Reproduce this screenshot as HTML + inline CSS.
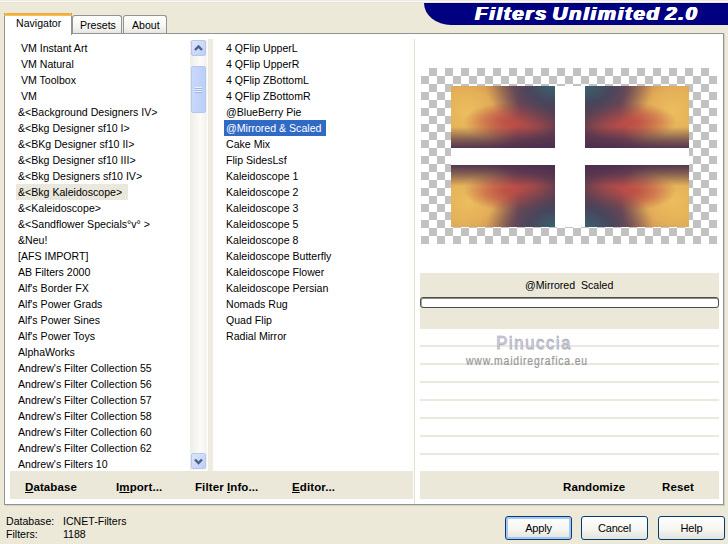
<!DOCTYPE html>
<html><head><meta charset="utf-8"><style>
*{margin:0;padding:0;box-sizing:border-box}
html,body{width:728px;height:544px;overflow:hidden}
body{background:#ECE9D8;font-family:"Liberation Sans",sans-serif;font-size:11px;color:#000;position:relative}
.a{position:absolute}
.t{position:absolute;white-space:pre;line-height:16px;height:16px;font-size:11.5px;transform:scaleX(.92);transform-origin:0 0}
.l1 .t{left:18px}
.l2 .t{left:226px}
.b{font-weight:bold;font-size:11.5px;letter-spacing:0.1px;white-space:pre;position:absolute;line-height:13px}
.u{text-decoration:underline}
.q{width:104px;height:62px;background:
 linear-gradient(180deg,rgba(72,46,78,0) 66%,rgba(72,46,78,.6) 86%,rgba(72,46,78,.92) 100%),
 radial-gradient(ellipse 66% 72% at 100% 0%,rgba(58,98,112,1) 0%,rgba(64,70,94,.85) 38%,rgba(66,62,86,.4) 70%,rgba(66,62,86,0) 100%),
 radial-gradient(ellipse 46% 32% at 58% 58%,rgba(190,76,70,1) 0%,rgba(190,76,70,.55) 55%,rgba(190,76,70,0) 100%),
 radial-gradient(ellipse 50% 80% at 16% 42%,rgba(236,190,94,1) 0%,rgba(232,182,88,.85) 45%,rgba(222,150,82,0) 100%),
 linear-gradient(90deg,#D09A5A 0%,#C07852 38%,#8A4C52 66%,#6A3E4E 100%)}

.btn{position:absolute;top:516px;height:24px;width:67px;border:1px solid #003C74;border-radius:3px;background:linear-gradient(#FFFFFF,#F4F4F0 60%,#E3E2DA);text-align:center;line-height:22px;letter-spacing:-0.2px}
</style></head><body>
<!-- top stripes -->
<div class="a" style="left:0;top:0;width:728px;height:1px;background:#EDEAE3"></div>
<div class="a" style="left:0;top:1px;width:728px;height:1px;background:#FCFCF4"></div>
<div class="a" style="left:0;top:2px;width:728px;height:1px;background:#E7E4D7"></div>

<!-- banner -->
<div class="a" style="left:424px;top:3px;width:304px;height:22px;background:#000080;border-bottom-left-radius:27px 22px"></div>
<div class="a" id="title" style="left:475px;top:2px;color:#fff;font-weight:bold;font-style:italic;font-size:19px;line-height:24px;white-space:pre;letter-spacing:1.5px;word-spacing:-2.5px;text-shadow:0.7px 0 0 #fff,-0.7px 0 0 #fff,0 0.4px 0 #fff;transform:scaleX(1.08);transform-origin:0 0">Filters Unlimited 2.0</div>

<!-- tab page -->
<div class="a" style="left:4px;top:33px;width:720px;height:472px;border:1px solid #8F9593;background:#fff;box-shadow:1px 1px 0 #D0CFC4"></div>

<!-- tabs -->
<div class="a" style="left:72px;top:15px;width:50px;height:18px;border:1px solid #8F9593;border-bottom:none;border-radius:3px 3px 0 0;background:linear-gradient(#FFFFFF,#F3F3EF 70%,#E6E5DE)"></div>
<div class="a" style="left:123px;top:15px;width:44px;height:18px;border:1px solid #8F9593;border-bottom:none;border-radius:3px 3px 0 0;background:linear-gradient(#FFFFFF,#F3F3EF 70%,#E6E5DE)"></div>
<div class="a" style="left:4px;top:13px;width:68px;height:22px;border:1px solid #8F9593;border-top:none;border-bottom:none;background:#fff"></div>
<div class="a" style="left:4px;top:13px;width:68px;height:3px;border-radius:3px 3px 0 0;background:linear-gradient(#E4A43C,#FAC44C)"></div>
<div class="t" style="left:16px;top:15px">Navigator</div>
<div class="t" style="left:80px;top:17px">Presets</div>
<div class="t" style="left:132px;top:17px">About</div>

<!-- list 1 -->
<div class="a" style="left:16px;top:184px;width:112px;height:16px;background:#EAE8DC"></div>
<div class="l1">
<div class="t" style="top:40px">&nbsp;VM Instant Art</div>
<div class="t" style="top:56px">&nbsp;VM Natural</div>
<div class="t" style="top:72px">&nbsp;VM Toolbox</div>
<div class="t" style="top:88px">&nbsp;VM</div>
<div class="t" style="top:104px">&amp;&lt;Background Designers IV&gt;</div>
<div class="t" style="top:120px">&amp;&lt;Bkg Designer sf10 I&gt;</div>
<div class="t" style="top:136px">&amp;&lt;BKg Designer sf10 II&gt;</div>
<div class="t" style="top:152px">&amp;&lt;Bkg Designer sf10 III&gt;</div>
<div class="t" style="top:168px">&amp;&lt;Bkg Designers sf10 IV&gt;</div>
<div class="t" style="top:184px">&amp;&lt;Bkg Kaleidoscope&gt;</div>
<div class="t" style="top:200px">&amp;&lt;Kaleidoscope&gt;</div>
<div class="t" style="top:216px">&amp;&lt;Sandflower Specials°v° &gt;</div>
<div class="t" style="top:232px">&amp;Neu!</div>
<div class="t" style="top:248px">[AFS IMPORT]</div>
<div class="t" style="top:264px">AB Filters 2000</div>
<div class="t" style="top:280px">Alf's Border FX</div>
<div class="t" style="top:296px">Alf's Power Grads</div>
<div class="t" style="top:312px">Alf's Power Sines</div>
<div class="t" style="top:328px">Alf's Power Toys</div>
<div class="t" style="top:344px">AlphaWorks</div>
<div class="t" style="top:360px">Andrew's Filter Collection 55</div>
<div class="t" style="top:376px">Andrew's Filter Collection 56</div>
<div class="t" style="top:392px">Andrew's Filter Collection 57</div>
<div class="t" style="top:408px">Andrew's Filter Collection 58</div>
<div class="t" style="top:424px">Andrew's Filter Collection 60</div>
<div class="t" style="top:440px">Andrew's Filter Collection 62</div>
<div class="t" style="top:456px">Andrew's Filters 10</div>
</div>

<!-- scrollbar -->
<div class="a" style="left:190px;top:40px;width:17px;height:430px;background:linear-gradient(90deg,#EEEDE5,#FBFBF8 60%,#F3F2EC)"></div>
<div class="a" style="left:191px;top:40px;width:15px;height:16px;border:1px solid #B5C8F1;border-radius:2px;background:linear-gradient(135deg,#DCE6FC,#BDCFF8)"></div>
<svg class="a" style="left:191px;top:40px" width="15" height="16"><path d="M4 10 L7.5 6.5 L11 10" stroke="#4D6185" stroke-width="2.4" fill="none"/></svg>
<div class="a" style="left:191px;top:66px;width:15px;height:47px;border:1px solid #B5C8F1;border-radius:2px;background:linear-gradient(90deg,#C9D8FC,#BCCFF8)"></div>
<div class="a" style="left:195px;top:87px;width:7px;height:6px;background:repeating-linear-gradient(#EEF3FE 0 1px,#9DB2E8 1px 2px)"></div>
<div class="a" style="left:191px;top:453px;width:15px;height:16px;border:1px solid #B5C8F1;border-radius:2px;background:linear-gradient(135deg,#DCE6FC,#BDCFF8)"></div>
<svg class="a" style="left:191px;top:453px" width="15" height="16"><path d="M4 6.5 L7.5 10 L11 6.5" stroke="#4D6185" stroke-width="2.4" fill="none"/></svg>
<div class="a" style="left:208px;top:39px;width:5px;height:432px;background:#EEECE0"></div>

<!-- list 2 -->
<div class="a" style="left:224px;top:120px;width:102px;height:16px;background:#316AC5"></div>
<div class="l2">
<div class="t" style="top:40px">4 QFlip UpperL</div>
<div class="t" style="top:56px">4 QFlip UpperR</div>
<div class="t" style="top:72px">4 QFlip ZBottomL</div>
<div class="t" style="top:88px">4 QFlip ZBottomR</div>
<div class="t" style="top:104px">@BlueBerry Pie</div>
<div class="t" style="top:120px;color:#fff">@Mirrored &amp; Scaled</div>
<div class="t" style="top:136px">Cake Mix</div>
<div class="t" style="top:152px">Flip SidesLsf</div>
<div class="t" style="top:168px">Kaleidoscope 1</div>
<div class="t" style="top:184px">Kaleidoscope 2</div>
<div class="t" style="top:200px">Kaleidoscope 3</div>
<div class="t" style="top:216px">Kaleidoscope 5</div>
<div class="t" style="top:232px">Kaleidoscope 8</div>
<div class="t" style="top:248px">Kaleidoscope Butterfly</div>
<div class="t" style="top:264px">Kaleidoscope Flower</div>
<div class="t" style="top:280px">Kaleidoscope Persian</div>
<div class="t" style="top:296px">Nomads Rug</div>
<div class="t" style="top:312px">Quad Flip</div>
<div class="t" style="top:328px">Radial Mirror</div>
</div>

<!-- right divider -->
<div class="a" style="left:410px;top:39px;width:4px;height:432px;background:#FDFDF7"></div>
<div class="a" style="left:414px;top:39px;width:1px;height:465px;background:#E2E2DA"></div>

<!-- preview checker -->
<div class="a" style="left:421px;top:68px;width:296px;height:176px;background:conic-gradient(#C2C2C2 25%,#fff 0 50%,#C2C2C2 0 75%,#fff 0) 0 0/16px 16px"></div>
<div class="a" style="left:451px;top:86px;width:238px;height:141px;background:#fff"></div>
<div class="q a" style="left:451px;top:86px"></div>
<div class="q a" style="left:585px;top:86px;transform:scaleX(-1)"></div>
<div class="q a" style="left:451px;top:165px;transform:scaleY(-1)"></div>
<div class="q a" style="left:585px;top:165px;transform:scale(-1,-1)"></div>

<!-- name bar -->
<div class="a" style="left:420px;top:273px;width:299px;height:56px;background:#EBE8D9"></div>
<div class="t" style="left:525px;top:277px">@Mirrored  Scaled</div>
<div class="a" style="left:420px;top:297px;width:299px;height:11px;border:1px solid #4E4E48;border-radius:3px;background:#fff;box-shadow:inset 0 1px 0 #8A8A84,inset 1px 0 0 #A8A8A2"></div>

<!-- lines -->
<div class="a" style="left:420px;top:345px;width:299px;height:2px;background:#E9E9DE"></div>
<div class="a" style="left:420px;top:363px;width:299px;height:2px;background:#E9E9DE"></div>
<div class="a" style="left:420px;top:381px;width:299px;height:2px;background:#E9E9DE"></div>
<div class="a" style="left:420px;top:399px;width:299px;height:2px;background:#E9E9DE"></div>
<div class="a" style="left:420px;top:417px;width:299px;height:2px;background:#E9E9DE"></div>
<div class="a" style="left:420px;top:435px;width:299px;height:2px;background:#E9E9DE"></div>
<div class="a" style="left:420px;top:453px;width:299px;height:2px;background:#E9E9DE"></div>

<!-- watermark -->
<div class="a" style="left:496px;top:331px;font-size:19px;line-height:24px;color:#D2D2E4;white-space:pre;letter-spacing:1.8px;-webkit-text-stroke:0.45px #9898AC;text-shadow:1px 1px 0 rgba(120,120,130,.3);transform:scaleX(.88);transform-origin:0 0">Pinuccia</div>
<div class="a" style="left:466px;top:354px;font-size:12px;line-height:14px;color:#A0A0A0;white-space:pre;letter-spacing:1px;-webkit-text-stroke:0.2px #888888;transform:scaleX(.86);transform-origin:0 0">www.maidiregrafica.eu</div>

<!-- footers -->
<div class="a" style="left:10px;top:471px;width:403px;height:28px;background:#EBE8D9"></div>
<div class="a" style="left:420px;top:471px;width:299px;height:28px;background:#EBE8D9"></div>
<div class="b" style="left:25px;top:481px"><span class="u">D</span>atabase</div>
<div class="b" style="left:116px;top:481px">I<span class="u">m</span>port...</div>
<div class="b" style="left:195px;top:481px">Filter <span class="u">I</span>nfo...</div>
<div class="b" style="left:292px;top:481px"><span class="u">E</span>ditor...</div>
<div class="b" style="left:563px;top:481px">Randomize</div>
<div class="b" style="left:662px;top:481px">Reset</div>

<!-- status -->
<div class="t" style="left:6px;top:515px;line-height:13px">Database:</div>
<div class="t" style="left:63px;top:515px;line-height:13px">ICNET-Filters</div>
<div class="t" style="left:6px;top:527.5px;line-height:13px">Filters:</div>
<div class="t" style="left:63px;top:527.5px;line-height:13px">1188</div>

<!-- buttons -->
<div class="btn" style="left:505px;box-shadow:inset 0 0 0 2px #A8C6F2">Apply</div>
<div class="btn" style="left:581px">Cancel</div>
<div class="btn" style="left:658px">Help</div>
</body></html>
